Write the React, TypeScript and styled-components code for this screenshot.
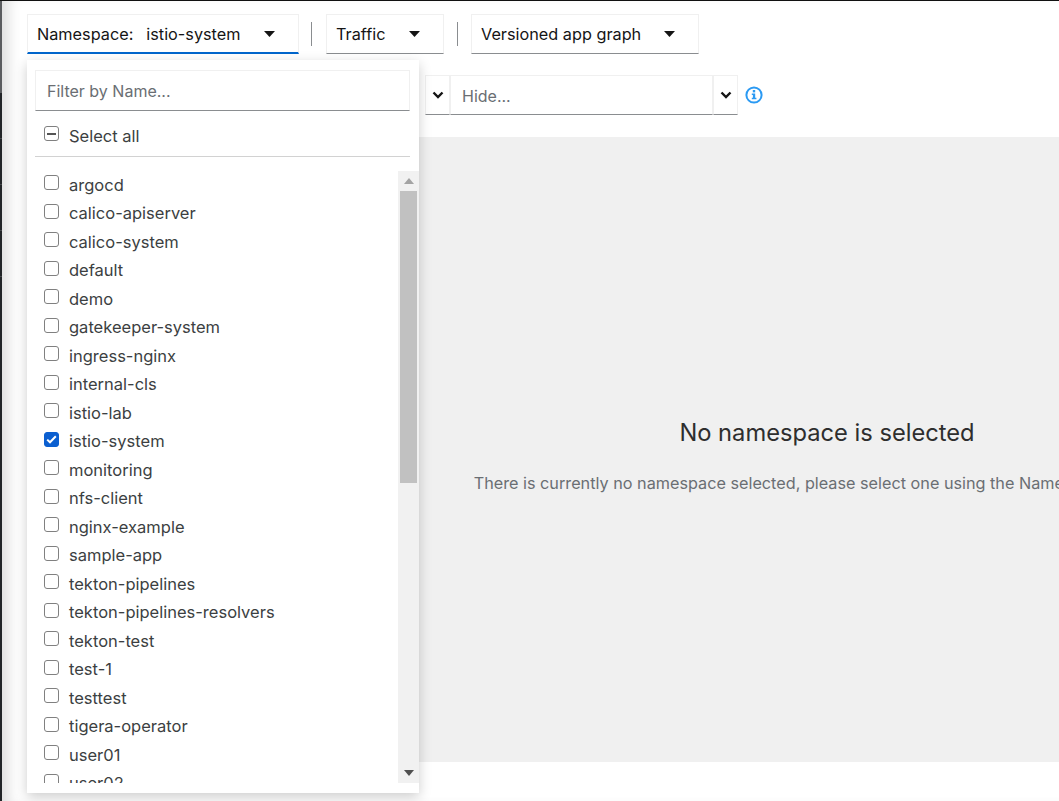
import React from 'react';
import styled, { createGlobalStyle } from 'styled-components';

const FONT = 'Inter, "Open Sans", "Noto Sans", sans-serif';

const GlobalStyle = createGlobalStyle`
  html, body {
    margin: 0;
    padding: 0;
    height: 100%;
    overflow: hidden;
    background: #fff;
    font-family: ${FONT};
  }
  * { box-sizing: border-box; }
`;

const Page = styled.div`
  display: flex;
  width: 1059px;
  height: 801px;
  overflow: hidden;
  background: #fff;
  border-top: 1px solid #111;
`;

const NavStrip = styled.div`
  flex: none;
  display: flex;
  flex-direction: column;
  width: 2px;
  background: #212427;
`;

const NavItem = styled.div<{ active?: boolean }>`
  flex: none;
  height: 46px;
  background: ${(p) => (p.active ? '#5a5c5f' : 'transparent')};
  border-bottom: 1px solid ${(p) => (p.active ? '#5a5c5f' : '#45484b')};
`;

const Main = styled.div`
  position: relative;
  flex: 1;
  min-width: 0;
  padding: 13px 0 0 25px;
  box-shadow: inset 14px 0 14px -8px rgba(3, 3, 3, 0.14);
`;

const Toolbar = styled.div`
  display: flex;
  align-items: center;
  height: 40px;
`;

const Select = styled.div<{ width: number; open?: boolean }>`
  display: flex;
  align-items: center;
  justify-content: space-between;
  width: ${(p) => p.width}px;
  height: 40px;
  padding: 0 23px 0 9px;
  font-size: 16.25px;
  color: #151515;
  background: #fff;
  border: 1px solid #f0f0f0;
  border-bottom: ${(p) => (p.open ? '2px solid #0066cc' : '1px solid #8a8d90')};
`;

const Label = styled.span`
  margin-right: 13px;
`;

const Divider = styled.div<{ before: number; after: number }>`
  width: 1px;
  height: 24px;
  margin: 0 ${(p) => p.after}px 0 ${(p) => p.before}px;
  background: #8a8d90;
`;

const Caret = () => (
  <svg width="11" height="6" viewBox="0 0 11 6">
    <path d="M0 0h11L5.5 6z" fill="#151515" />
  </svg>
);

const SecondRow = styled.div`
  display: flex;
  height: 40px;
  margin: 21px 0 0 398px;
  align-items: center;
`;

const InputBox = styled.div<{ width: number }>`
  display: flex;
  align-items: center;
  width: ${(p) => p.width}px;
  height: 40px;
  padding: 2px 0 0 11px;
  font-size: 16px;
  color: #6a6e73;
  border: 1px solid #f0f0f0;
  border-bottom: 1px solid #8a8d90;
`;

const ChevronBox = styled.div`
  display: flex;
  align-items: center;
  justify-content: center;
  width: 25px;
  height: 40px;
  border: 1px solid #f0f0f0;
  border-bottom: 1px solid #8a8d90;
`;

const Chevron = () => (
  <svg width="12" height="8" viewBox="0 0 12 8">
    <path d="M1.5 1.5 6 6l4.5-4.5" fill="none" stroke="#151515" strokeWidth="2.4" />
  </svg>
);

const InfoIcon = styled.svg`
  margin-left: 7px;
`;

const EmptyArea = styled.div`
  display: flex;
  flex-direction: column;
  align-items: center;
  height: 625px;
  width: 1598px;
  margin: 22px 0 0 1px;
  padding-top: 281px;
  background: #f0f0f0;
  text-align: center;
`;

const EmptyTitle = styled.div`
  font-size: 23.7px;
  line-height: 30px;
  color: #2e2e2e;
`;

const EmptyText = styled.div`
  margin-top: 23px;
  font-size: 16.23px;
  line-height: 24px;
  color: #6a6e73;
  white-space: nowrap;
`;

const Menu = styled.div`
  position: absolute;
  left: 25px;
  top: 59px;
  width: 392px;
  height: 733px;
  padding: 10px 0 0 8px;
  background: #fff;
  box-shadow: 0 4px 12px rgba(3, 3, 3, 0.2);
`;

const Filter = styled.div`
  display: flex;
  align-items: center;
  width: 375px;
  height: 41px;
  padding-left: 11px;
  font-size: 16px;
  color: #6a6e73;
  border: 1px solid #f0f0f0;
  border-bottom: 1px solid #8a8d90;
`;

const SelectAll = styled.div`
  display: flex;
  align-items: center;
  width: 375px;
  height: 46px;
  padding: 4px 0 0 9px;
  font-size: 16.5px;
  color: #3c3f42;
  border-bottom: 1px solid #d2d2d2;
`;

const Box = styled.span<{ checked?: boolean }>`
  display: flex;
  align-items: center;
  justify-content: center;
  flex: none;
  width: 15px;
  height: 15px;
  margin: 0 10px 4px 0;
  border-radius: 3px;
  background: ${(p) => (p.checked ? '#0b5fd0' : '#fff')};
  border: 1.5px solid ${(p) => (p.checked ? '#0b5fd0' : '#808080')};
`;

const Dash = styled.span`
  width: 9px;
  height: 2px;
  background: #555;
`;

const ListArea = styled.div`
  position: relative;
  height: 612.5px;
  width: 384px;
  margin-top: 13.5px;
  overflow: hidden;
`;

const Row = styled.div`
  display: flex;
  align-items: center;
  height: 28.5px;
  padding-left: 9px;
  font-size: 16.5px;
  color: #3c3f42;
  white-space: nowrap;
`;

const Scrollbar = styled.div`
  position: absolute;
  top: -0.5px;
  right: 0;
  bottom: 0;
  display: flex;
  flex-direction: column;
  align-items: center;
  width: 21px;
  background: #f1f1f1;
`;

const ScrollEnd = styled.div`
  display: flex;
  align-items: center;
  justify-content: center;
  flex: none;
  width: 100%;
  height: 21px;
`;

const Thumb = styled.div`
  flex: none;
  width: 17px;
  height: 292px;
  background: #c1c1c1;
`;

const Spacer = styled.div`
  flex: 1;
`;

const namespaces = [
  'argocd', 'calico-apiserver', 'calico-system', 'default', 'demo', 'gatekeeper-system',
  'ingress-nginx', 'internal-cls', 'istio-lab', 'istio-system', 'monitoring', 'nfs-client',
  'nginx-example', 'sample-app', 'tekton-pipelines', 'tekton-pipelines-resolvers',
  'tekton-test', 'test-1', 'testtest', 'tigera-operator', 'user01', 'user02',
];

export default function App() {
  return (
    <Page>
      <GlobalStyle />
      <NavStrip>
        <NavItem active />
        <NavItem active />
        <NavItem />
        <NavItem />
        <NavItem />
        <NavItem />
      </NavStrip>
      <Main>
        <Toolbar>
          <Select width={272} open>
            <span><Label>Namespace:</Label>istio-system</span>
            <Caret />
          </Select>
          <Divider before={12} after={14} />
          <Select width={118}>
            <span>Traffic</span>
            <Caret />
          </Select>
          <Divider before={13} after={13} />
          <Select width={228}>
            <span>Versioned app graph</span>
            <Caret />
          </Select>
        </Toolbar>
        <SecondRow>
          <ChevronBox><Chevron /></ChevronBox>
          <InputBox width={263}>Hide...</InputBox>
          <ChevronBox><Chevron /></ChevronBox>
          <InfoIcon width="18" height="18" viewBox="0 0 18 18">
            <circle cx="9" cy="9" r="7.6" fill="none" stroke="#2b9af3" strokeWidth="2" />
            <rect x="7.8" y="4" width="2.4" height="2.4" fill="#2b9af3" />
            <path d="M6.8 7.5h3.4v4.2h1.2v1.6H6.8v-1.6h1.1V9.1H6.8z" fill="#2b9af3" />
          </InfoIcon>
        </SecondRow>
        <EmptyArea>
          <EmptyTitle>No namespace is selected</EmptyTitle>
          <EmptyText>There is currently no namespace selected, please select one using the Namespace selector.</EmptyText>
        </EmptyArea>
        <Menu>
          <Filter>Filter by Name...</Filter>
          <SelectAll>
            <Box><Dash /></Box>
            Select all
          </SelectAll>
          <ListArea>
            {namespaces.map((name) => (
              <Row key={name}>
                <Box checked={name === 'istio-system'}>
                  {name === 'istio-system' && (
                    <svg width="11" height="9" viewBox="0 0 11 9">
                      <path d="M1.2 4.6 4 7.3l5.8-6" fill="none" stroke="#fff" strokeWidth="2" />
                    </svg>
                  )}
                </Box>
                {name}
              </Row>
            ))}
            <Scrollbar>
              <ScrollEnd>
                <svg width="10" height="6" viewBox="0 0 10 6"><path d="M0 6h10L5 0z" fill="#a3a3a3" /></svg>
              </ScrollEnd>
              <Thumb />
              <Spacer />
              <ScrollEnd>
                <svg width="10" height="6" viewBox="0 0 10 6"><path d="M0 0h10L5 6z" fill="#505050" /></svg>
              </ScrollEnd>
            </Scrollbar>
          </ListArea>
        </Menu>
      </Main>
    </Page>
  );
}
